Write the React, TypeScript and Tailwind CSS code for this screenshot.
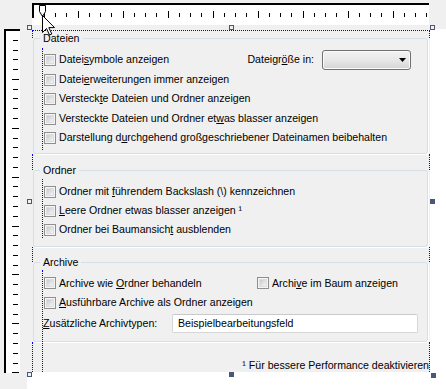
import React from "react";

function Check() {
  return (
    <div className="w-[12px] h-[12px] shrink-0 border border-[#8f8f8f] bg-[#f5f5f5] p-[1px] flex">
      <div className="flex-1 bg-linear-to-br from-[#c9cbcf] to-[#f4f4f4] border border-[#dedede]" />
    </div>
  );
}

function CheckItem({ children, className = "" }: { children: React.ReactNode; className?: string }) {
  return (
    <div className={"flex items-center whitespace-nowrap " + className}>
      <Check />
      <span className="ml-[3px]">{children}</span>
    </div>
  );
}

function GroupBox({
  title,
  className,
  children,
}: {
  title: string;
  className: string;
  children: React.ReactNode;
}) {
  return (
    <div
      className={
        "relative ml-[1px] mr-[2px] rounded-[3px] border border-[#d5dfe5] shadow-[1px_1px_0_0_#ffffff] pl-[10px] pt-[11px] flex flex-col " +
        className
      }
    >
      <span className="absolute left-[6px] top-[-7px] px-[3px] bg-[#f0f0f0] leading-[13px]">{title}</span>
      {children}
    </div>
  );
}

function TopRuler() {
  const shorts: number[] = [];
  const longs: number[] = [];
  for (let k = 1; k * 11.25 < 396; k++) {
    const x = Math.round(0.7 + 11.25 * k);
    if (k % 4 === 0) longs.push(x);
    else shorts.push(x);
  }
  return (
    <svg width="397" height="22" viewBox="0 0 397 22" className="block">
      <rect x="0" y="0" width="397" height="22" fill="#ffffff" />
      <rect x="0" y="0" width="397" height="2" fill="#000000" />
      <rect x="0" y="0" width="2" height="15" fill="#000000" />
      {longs.map((x) => (
        <rect key={"l" + x} x={x} y="8" width="1" height="7" fill="#000000" />
      ))}
      {shorts.map((x) => (
        <rect key={"s" + x} x={x} y="10" width="1" height="4" fill="#000000" />
      ))}
    </svg>
  );
}

function LeftRuler() {
  const ticks: { y: number; long: boolean }[] = [];
  for (let k = 1; k * 9.78 < 344; k++) {
    ticks.push({ y: Math.round(1 + 9.78 * k), long: k % 5 === 0 });
  }
  return (
    <svg width="16" height="344" viewBox="0 0 16 344" className="block">
      <rect x="0" y="0" width="16" height="344" fill="#ffffff" />
      <rect x="0" y="0" width="16" height="2" fill="#000000" />
      <rect x="0" y="0" width="2" height="344" fill="#000000" />
      {ticks.map((t) =>
        t.long ? (
          <rect key={t.y} x="8" y={t.y} width="7" height="1" fill="#000000" />
        ) : (
          <rect key={t.y} x="9" y={t.y} width="5" height="1" fill="#000000" />
        )
      )}
    </svg>
  );
}

export default function App() {
  return (
    <div className="relative w-[446px] h-[389px] overflow-hidden bg-[#f0f0f0] font-['Liberation_Sans',Arial,sans-serif] text-[10.6px] text-black">
      {/* top ruler */}
      <div className="h-[29px] pl-[32px] pt-[3px]">
        <TopRuler />
      </div>

      <div className="flex h-[360px]">
        {/* left ruler */}
        <div className="w-[27px] pl-[4px]">
          <LeftRuler />
        </div>

        {/* canvas */}
        <div className="flex-1 flex flex-col">
          <div className="flex h-[343px]">
            <div className="w-[5px] bg-[#f0f0f0]" />
            <div className="w-[398px] mt-[1px] bg-[#f0f0f0] flex flex-col pt-[8px]">
              <GroupBox title="Dateien" className="h-[116px]">
                <div className="flex items-center h-[20px]">
                  <CheckItem>
                    Datei<u>s</u>ymbole anzeigen
                  </CheckItem>
                  <div className="flex-1" />
                  <span className="mr-[8px] whitespace-nowrap">
                    Dateigr<u>ö</u>ße in:
                  </span>
                  <div className="w-[89px] h-[20px] mr-[16px] rounded-[3px] border border-[#707070] bg-linear-to-b from-[#f3f3f3] via-[#e8e8e8] to-[#d4d4d4] shadow-[inset_0_0_0_1px_#fbfbfb] flex items-center justify-end pr-[4px]">
                    <svg width="7" height="4" viewBox="0 0 7 4">
                      <path d="M0 0 H7 L3.5 4 Z" fill="#000000" />
                    </svg>
                  </div>
                </div>
                <CheckItem className="h-[19.5px]">
                  Datei<u>e</u>rweiterungen immer anzeigen
                </CheckItem>
                <CheckItem className="h-[19.5px]">
                  Versteck<u>t</u>e Dateien und Ordner anzeigen
                </CheckItem>
                <CheckItem className="h-[19.5px]">
                  Versteckte Dateien und Ordner et<u>w</u>as blasser anzeigen
                </CheckItem>
                <CheckItem className="h-[19.5px]">
                  Darstellung d<u>u</u>rchgehend großgeschriebener Dateinamen beibehalten
                </CheckItem>
              </GroupBox>

              <GroupBox title="Ordner" className="h-[77px] mt-[16px]">
                <CheckItem className="h-[19px]">
                  Ordner mit <u>f</u>ührendem Backslash (\) kennzeichnen
                </CheckItem>
                <CheckItem className="h-[19px]">
                  <u>L</u>eere Ordner etwas blasser anzeigen ¹
                </CheckItem>
                <CheckItem className="h-[19px]">
                  Ordner bei Baumansich<u>t</u> ausblenden
                </CheckItem>
              </GroupBox>

              <GroupBox title="Archive" className="h-[80px] mt-[15px]">
                <div className="flex items-center h-[19px]">
                  <CheckItem className="w-[213px]">
                    Archive wie <u>O</u>rdner behandeln
                  </CheckItem>
                  <CheckItem>
                    Archi<u>v</u>e im Baum anzeigen
                  </CheckItem>
                </div>
                <CheckItem className="h-[19px]">
                  <u>A</u>usführbare Archive als Ordner anzeigen
                </CheckItem>
                <div className="flex items-center h-[23px]">
                  <span className="w-[128px] -ml-[1px] whitespace-nowrap">
                    <u>Z</u>usätzliche Archivtypen:
                  </span>
                  <div className="w-[246px] h-[19px] ml-[1px] rounded-[2px] border border-[#d6d6d6] border-t-[#c9c9c9] bg-white flex items-center pl-[5px] whitespace-nowrap">
                    Beispielbearbeitungsfeld
                  </div>
                </div>
              </GroupBox>

              <div className="flex-1 flex justify-end pt-[17px] pr-[1px] leading-[13px] whitespace-nowrap">
                ¹ Für bessere Performance deaktivieren
              </div>
            </div>
            <div className="flex-1 bg-white" />
          </div>
          <div className="flex-1 bg-white" />
        </div>
      </div>

      {/* layout markers (dotted blue) */}
      <div className="absolute left-[32px] top-[30px] w-[398px] border-t border-dotted border-[#0000ff]" />
      <div className="absolute left-[32px] top-[30px] h-[8px] border-l border-dotted border-[#0000ff]" />
      <div className="absolute left-[32px] top-[154px] h-[16px] border-l border-dotted border-[#0000ff]" />
      <div className="absolute left-[32px] top-[247px] h-[15px] border-l border-dotted border-[#0000ff]" />
      <div className="absolute left-[32px] top-[342px] h-[30px] border-l border-dotted border-[#0000ff]" />
      <div className="absolute left-[429px] top-[30px] h-[8px] border-l border-dotted border-[#0000ff]" />
      <div className="absolute left-[429px] top-[154px] h-[16px] border-l border-dotted border-[#0000ff]" />
      <div className="absolute left-[429px] top-[247px] h-[15px] border-l border-dotted border-[#0000ff]" />
      <div className="absolute left-[429px] top-[342px] h-[30px] border-l border-dotted border-[#0000ff]" />
      <div className="absolute left-[42px] top-[48px] h-[102px] border-l border-dotted border-[#0000ff]" />
      <div className="absolute left-[42px] top-[179px] h-[59px] border-l border-dotted border-[#0000ff]" />
      <div className="absolute left-[42px] top-[270px] h-[102px] border-l border-dotted border-[#0000ff]" />

      {/* resize handles */}
      <div className="absolute left-[27px] top-[25px] w-[5px] h-[5px] border border-[#4a5878] bg-[#f0f0f0]" />
      <div className="absolute left-[229px] top-[25px] w-[5px] h-[5px] border border-[#4a5878] bg-[#f0f0f0]" />
      <div className="absolute left-[430px] top-[25px] w-[5px] h-[5px] border border-[#4a5878] bg-[#f0f0f0]" />
      <div className="absolute left-[27px] top-[199px] w-[5px] h-[5px] border border-[#4a5878] bg-[#f0f0f0]" />
      <div className="absolute left-[430px] top-[199px] w-[5px] h-[5px] bg-[#4a5878]" />
      <div className="absolute left-[27px] top-[372px] w-[5px] h-[5px] border border-[#4a5878] bg-[#f0f0f0]" />
      <div className="absolute left-[229px] top-[372px] w-[5px] h-[5px] bg-[#4a5878]" />
      <div className="absolute left-[431px] top-[373px] w-[5px] h-[5px] bg-[#4a5878]" />

      {/* ruler marker and mouse cursor */}
      <svg className="absolute left-[34px] top-[3px]" width="24" height="34" viewBox="34 3 24 34">
        <path d="M39.5 5.5 H45.5 V11.5 L42.5 16.5 L39.5 11.5 Z" fill="#ffffff" stroke="#000000" strokeWidth="1" />
        <path
          d="M42.5 15.5 L42.5 32.5 L46.5 28.5 L49.5 35 L51.8 34 L48.8 27.6 L54.5 27.6 Z"
          fill="#ffffff"
          stroke="#000000"
          strokeWidth="1"
          strokeLinejoin="round"
        />
      </svg>
    </div>
  );
}
